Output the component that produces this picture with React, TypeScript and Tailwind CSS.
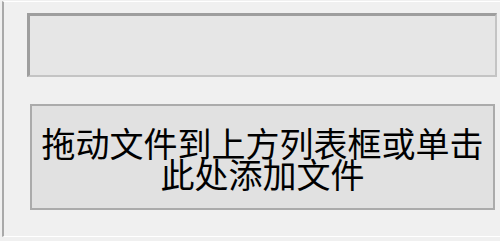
import React from "react";

export default function App() {
  return (
    <div className="w-[500px] h-[241px] bg-[#f0f0f0] pt-[1px] pl-[2px] overflow-hidden">
      <div className="h-[236px] border-t border-t-white border-l-2 border-l-[#a9a9a9] border-b border-b-white flex flex-col pt-[11px] pl-[23px] pr-[3px]">
        <div className="h-[64px] bg-[#e6e6e6] border-t-[3px] border-l-[3px] border-t-[#9e9e9e] border-l-[#9e9e9e] border-r-2 border-b-2 border-r-[#c4c4c4] border-b-[#c4c4c4]" />
        <div
          className="mt-[27px] ml-[3px] mr-[2px] h-[106px] bg-[#e1e1e1] border-2 border-[#ababab] flex items-center justify-center text-center text-black text-[34px] leading-[31px]"
          style={{ fontFamily: '"Noto Sans CJK SC", "Noto Sans", sans-serif' }}
        >
          <div className="pt-[2px]">
            拖动文件到上方列表框或单击
            <br />
            此处添加文件
          </div>
        </div>
      </div>
    </div>
  );
}
